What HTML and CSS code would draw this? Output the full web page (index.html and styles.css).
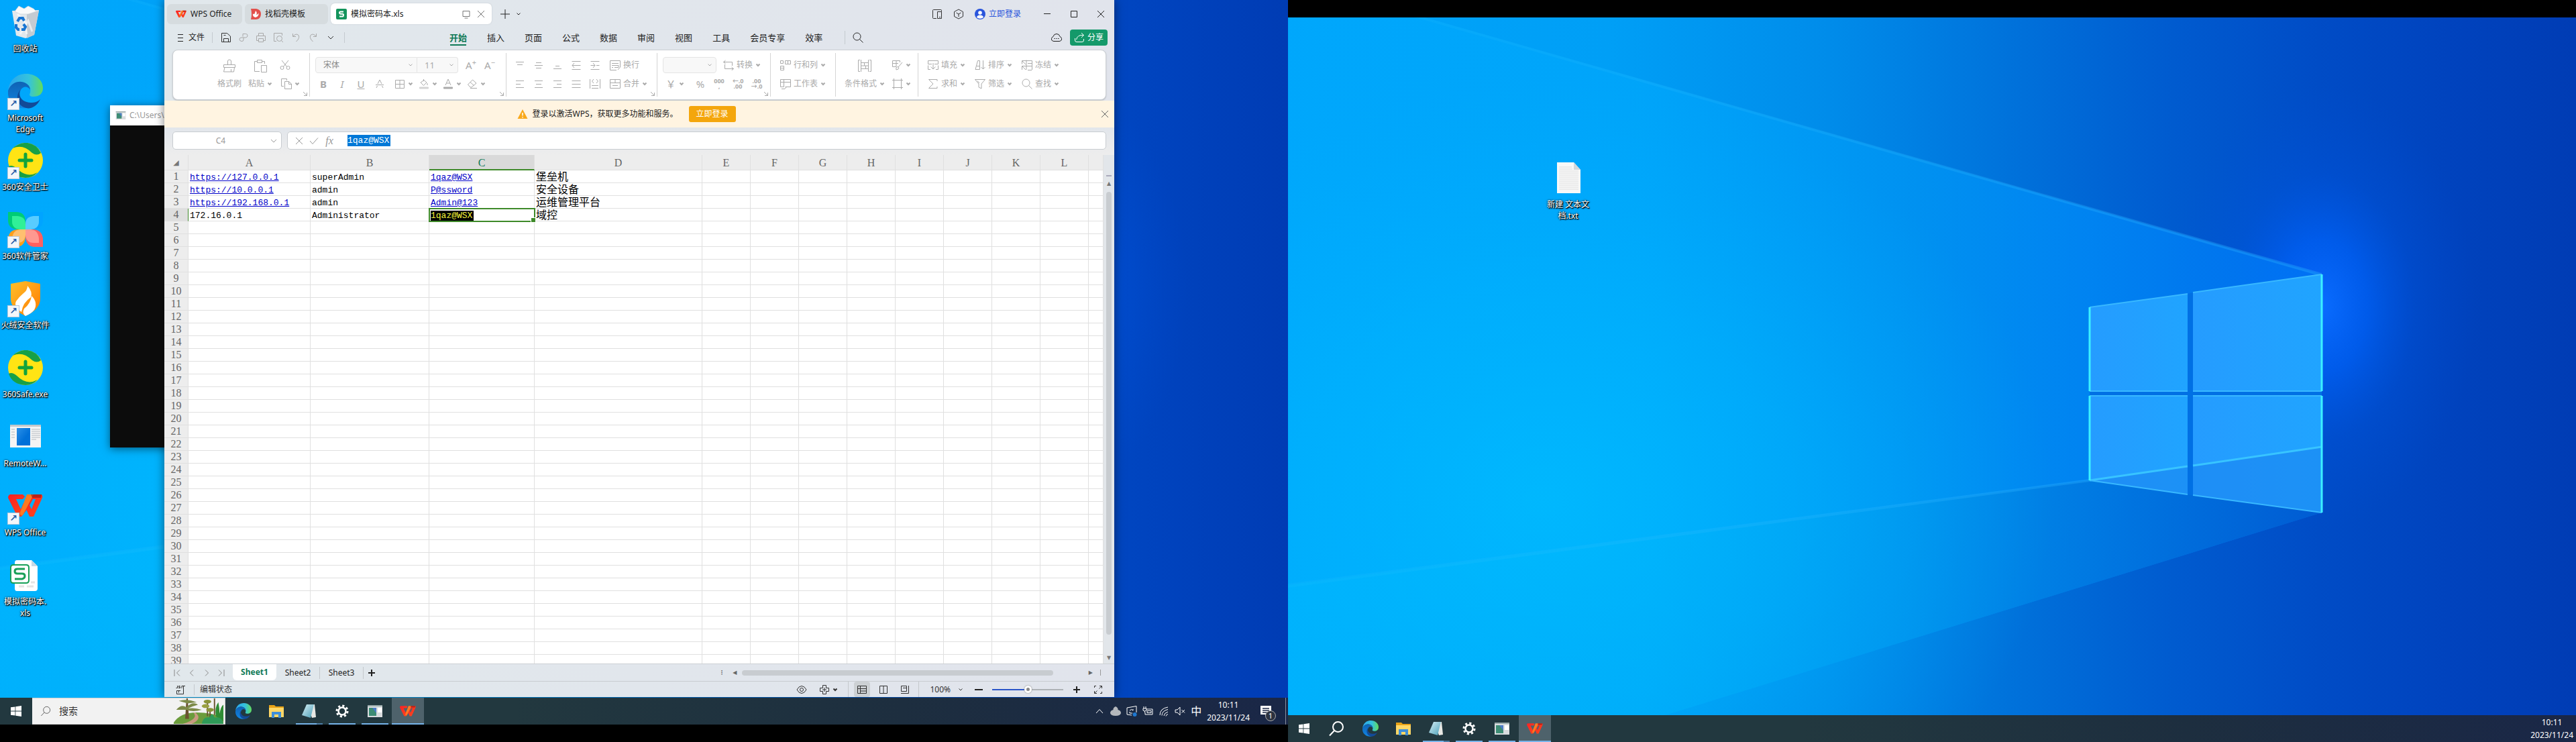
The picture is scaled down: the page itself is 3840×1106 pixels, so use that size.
FILE: index.html
```html
<!DOCTYPE html>
<html lang="zh-CN">
<head>
<meta charset="utf-8">
<title>模拟密码本.xls - WPS Office</title>
<link rel="stylesheet" href="styles.css">
</head>
<body>
<svg class="sprite" aria-hidden="true">
  <defs>
    <linearGradient id="base" x1="0" x2="1" y1="0" y2="0"><stop offset="0" stop-color="#00a4fa"/><stop offset=".25" stop-color="#009ff6"/><stop offset=".42" stop-color="#008cea"/><stop offset=".55" stop-color="#0074dc"/><stop offset=".68" stop-color="#005cd0"/><stop offset=".8" stop-color="#004cc6"/><stop offset=".9" stop-color="#0043be"/><stop offset="1" stop-color="#003cb4"/></linearGradient>
    <linearGradient id="cone" gradientUnits="userSpaceOnUse" x1="0" x2="1541" y1="0" y2="0"><stop offset="0" stop-color="#00a8fc"/><stop offset=".35" stop-color="#00a6fb"/><stop offset=".6" stop-color="#0096f4"/><stop offset=".78" stop-color="#008af8"/><stop offset="1" stop-color="#0074f4"/></linearGradient>
    <linearGradient id="floor" gradientUnits="userSpaceOnUse" x1="0" x2="1541" y1="800" y2="940"><stop offset="0" stop-color="#00b2fc"/><stop offset=".35" stop-color="#00a8f6"/><stop offset=".6" stop-color="#0090ea"/><stop offset=".8" stop-color="#0072dc"/><stop offset="1" stop-color="#0056cc"/></linearGradient>
    <linearGradient id="beam" x1="0" x2="1" y1="0" y2="0"><stop offset="0" stop-color="#3cc8ff" stop-opacity=".08"/><stop offset="1" stop-color="#2ab0ff" stop-opacity=".35"/></linearGradient>
    <radialGradient id="glow"><stop offset="0" stop-color="#0a6cff"/><stop offset=".3" stop-color="#0062fa" stop-opacity=".7"/><stop offset=".6" stop-color="#0058e8" stop-opacity=".25"/><stop offset="1" stop-color="#0050d8" stop-opacity="0"/></radialGradient>
    <radialGradient id="haze"><stop offset="0" stop-color="#00beff" stop-opacity=".75"/><stop offset=".5" stop-color="#00b8ff" stop-opacity=".45"/><stop offset="1" stop-color="#00b0ff" stop-opacity="0"/></radialGradient>
    <linearGradient id="pane" x1="0" x2="1" y1="0" y2="0"><stop offset="0" stop-color="#259cff"/><stop offset="1" stop-color="#20a4ff"/></linearGradient>
    <linearGradient id="edgeA" x1="0" x2="1" y1="0" y2="0"><stop offset="0" stop-color="#2aa5ee"/><stop offset=".6" stop-color="#35c3dc"/><stop offset="1" stop-color="#62dc5c"/></linearGradient>
    <linearGradient id="edgeB" x1="0" x2="0" y1="0" y2="1"><stop offset="0" stop-color="#0f62b4"/><stop offset="1" stop-color="#1186e4"/></linearGradient>
    <linearGradient id="wpsRed" x1="0" x2="1" y1="0" y2="1"><stop offset="0" stop-color="#fb1f24"/><stop offset="1" stop-color="#ff4a1c"/></linearGradient>
    <linearGradient id="shield" x1="0" x2="1" y1="0" y2="1"><stop offset="0" stop-color="#ffc02a"/><stop offset="1" stop-color="#ff7a00"/></linearGradient>
    <linearGradient id="note" x1="0" x2="1" y1="0" y2="1"><stop offset="0" stop-color="#d8f0f6"/><stop offset="1" stop-color="#4a9fb8"/></linearGradient>
    <linearGradient id="blueBox" x1="0" x2="1" y1="0" y2="1"><stop offset="0" stop-color="#2a90e8"/><stop offset=".6" stop-color="#0070d8"/></linearGradient>
  </defs>

  <symbol id="wallpaper" viewBox="0 0 1920 1040" preserveAspectRatio="none">
    <rect width="1920" height="1040" fill="url(#base)"/>
    <ellipse cx="1541" cy="430" rx="230" ry="330" fill="url(#glow)"/>
    <path d="M0 0H204L1541 383V738L562 1040H0Z" fill="url(#cone)" opacity=".8"/>
    <path d="M0 846L1195 690 1541 738 562 1040H0Z" fill="url(#floor)" opacity=".8"/>
    <ellipse cx="380" cy="720" rx="760" ry="620" fill="url(#haze)"/>
    <path d="M204 0L1541 381V386L190 0Z" fill="url(#beam)"/>
    <path d="M0 844L1195 688V692L0 850Z" fill="url(#beam)"/>
    <path d="M1195 432L1341 412V557H1195Z" fill="url(#pane)"/>
    <path d="M1349 410L1541 383V557H1349Z" fill="url(#pane)"/>
    <path d="M1195 564H1341V711L1195 690Z" fill="url(#pane)"/>
    <path d="M1349 564H1541V738L1349 712Z" fill="url(#pane)"/>
    <path d="M1195 690L1341 669V711ZM1349 668L1541 640V738L1349 712Z" fill="#1a86f0" opacity=".6"/>
    <path d="M1341 412V557H1349V410ZM1195 557V564H1541V557ZM1341 564V711L1349 712V564Z" fill="#0070e4"/>
    <path d="M1195 690L1341 669M1349 668L1541 640" stroke="#38c4ff" stroke-width="3" fill="none"/>
    <path d="M1349 410L1541 383M1195 432L1341 412M1195 557H1341M1349 557H1541M1195 564H1341M1349 564H1541M1195 690L1341 711M1349 712L1541 738" stroke="#38b8ff" stroke-width="2" fill="none"/>
    <path d="M1195 432V557M1195 564V690M1541 383V557M1541 564V738" stroke="#3cf0ff" stroke-width="3" fill="none"/>
  </symbol>

  <symbol id="edge" viewBox="0 0 52 52">
    <path d="M0 25C2 8 14 0 27 0 42 0 52 10 52 21 52 30 46 34 38 34 32 34 31 32 33 28 35 20 29 13 19 12 10 12 3 17 0 25Z" fill="url(#edgeA)"/>
    <path d="M0 25C4 15 12 11 20 12 28 13 33 18 33 24 30 18 22 18 19 24 14 34 20 46 32 50 14 56-2 42 0 25Z" fill="url(#edgeB)"/>
    <path d="M18 24C14 36 24 43 34 43 40 43 44 42 48 38 44 47 35 53 27 51 14 48 10 34 18 24Z" fill="#124a98"/>
  </symbol>
  <symbol id="wps" viewBox="0 0 52 34">
    <path d="M3 0H22L25 3 22 7H12L19 22 23 13 28 22 20 33H14L0 5Q0 1 3 0Z" fill="url(#wpsRed)"/>
    <path d="M34 0H50Q52 2 51 5L38 33H32L27 22 31 14 35 22 41 7H37L30 20 20 33 33 3Z" fill="url(#wpsRed)"/>
    <path d="M28 0H38L22 31Q17 32 18 27Z" fill="#ff7a20"/>
    <path d="M34 0H50L49 5H36Z" fill="#8e1a12" opacity=".6"/>
  </symbol>
  <symbol id="recycle" viewBox="0 0 52 52">
    <path d="M6 9L46 8 39 45 26 50 12 46Z" fill="#e3e8ec"/><path d="M28 14L46 9 39 45 28 50Z" fill="#c4cbd2"/>
    <path d="M10 10L16 2 24 6 30 2 38 6 42 10 30 14 18 14Z" fill="#fafafa" stroke="#ccd2d8" stroke-width=".7"/><path d="M14 14L20 20M24 20L28 44M18 44L30 24 36 40" stroke="#fff" stroke-width="3" opacity=".6"/>
    <path d="M14 25L17 20H22L24 24M12 29V34L15 37H17M20 37H24L26 33 23 29" fill="none" stroke="#1976d2" stroke-width="4"/>
  </symbol>
  <symbol id="safe" viewBox="0 0 52 52">
    <ellipse cx="26" cy="26" rx="26" ry="26" fill="#ffe414"/><path d="M7 8Q17-1 29 0 43 2 49 15 43 20 36 15 22 1 7 8Z" fill="#17a047"/><path d="M1 35Q6 32 13 38 28 53 44 44 36 52 26 52 6 51 1 35Z" fill="#17a047"/>
    <path d="M26 17V35M17 26H35" stroke="#12a43c" stroke-width="5" stroke-linecap="round"/>
  </symbol>
  <symbol id="manager" viewBox="0 0 52 52">
    <path d="M0 0H12Q26 0 26 15V26H14Q0 25 0 12Z" fill="#00cc76"/><path d="M6 6H14Q26 7 26 18V26H18Q6 25 6 14Z" fill="#30f098"/>
    <path d="M52 0H40Q26 0 26 15V26H38Q52 25 52 12Z" fill="#00a4ff"/><path d="M46 6H38Q26 7 26 18V26H34Q46 25 46 14Z" fill="#58ccff"/>
    <path d="M0 52V40Q1 27 14 26H26V37Q25 52 12 52Z" fill="#ff9f1c"/><path d="M6 46V40Q7 27 18 26H26V34Q25 46 14 46Z" fill="#ffc070"/>
    <path d="M52 52V40Q51 27 38 26H26V37Q27 52 40 52Z" fill="#ff6060"/><path d="M46 46V40Q45 27 34 26H26V34Q27 46 38 46Z" fill="#ff9890"/>
  </symbol>
  <symbol id="huorong" viewBox="0 0 52 52">
    <path d="M4 4L26 0 48 4V26Q48 42 26 52 4 42 4 26Z" fill="url(#shield)"/>
    <path d="M29 7Q37 16 34 24 22 32 20 46 8 38 12 30 16 24 22 19 29 14 29 7Z" fill="#fff"/><path d="M35 22Q45 32 39 43 34 49 26 52 20 48 24 41 34 33 35 22Z" fill="#fff"/>
  </symbol>
  <symbol id="remote" viewBox="0 0 52 52"><path d="M3 8H49V42H3Z" fill="#f4f4f4"/><path d="M3 8H49V11H3Z" fill="#c4c8cc"/><path d="M13 13H33V39H13Z" fill="url(#blueBox)"/><path d="M35 15H48M35 18H48M35 21H48M35 24H48M35 27H48M35 30H42M5 15H10M5 19H10M5 23H10M5 27H10" stroke="#b4bac0" stroke-width="1"/></symbol>
  <symbol id="xls" viewBox="0 0 52 52"><path d="M13 4H35L44 13V46Q44 50 40 50H13Q10 50 10 46V8Q10 4 13 4Z" fill="#fff"/><path d="M35 4V13H44Z" fill="#c8d8e4"/><path d="M16 43H24M28 43H38M34 37H40" stroke="#e4e4e4" stroke-width="3"/><rect x="4" y="11" width="27" height="27" rx="4" fill="#fff"/><path d="M8 11H27Q31 11 31 15V34Q31 38 27 38H8Q4 38 4 34V15Q4 11 8 11Z" fill="none" stroke="#19a058" stroke-width="2"/><path d="M25 17H14Q10 17 10 20.500T14 24H21Q25 24 25 27.500T21 32H10" fill="none" stroke="#19a058" stroke-width="3"/></symbol>
  <symbol id="txt" viewBox="0 0 52 52"><path d="M9 3H34L44 14V49H9Z" fill="#f8f8f8"/><path d="M34 3V14H44Z" fill="#d4d8dc"/><path d="M12 10H31M12 13H32M12 16H41M12 19H41M12 22H41M12 25H41M12 28H41M12 31H41M12 34H41M12 37H41M12 40H41M12 43H41" stroke="#dedede"/></symbol>

  <symbol id="start" viewBox="0 0 16 16"><path d="M0 2.300L6.500 1.400V7.600H0ZM7.300 1.300L16 0V7.600H7.300ZM0 8.400H6.500V14.600L0 13.700ZM7.300 8.400H16V16L7.300 14.700Z" fill="#fff"/></symbol>
  <symbol id="lens" viewBox="0 0 24 24"><circle cx="14.500" cy="9.500" r="7.500"/><path d="M9 15L2 22.500"/></symbol>
  <symbol id="folder" viewBox="0 0 24 24"><path d="M1 3H9L11 5H23V21H1Z" fill="#e8a317"/><path d="M1 7H23V21H1Z" fill="#ffd867"/><path d="M5 22V13H19V22H15V17H9V22Z" fill="#3f8fd8"/></symbol>
  <symbol id="notepad" viewBox="0 0 24 24"><path d="M9 2H20L22 21 16 22Z" fill="#e8e8e4"/><path d="M8 2H19L14 22 1 18Z" fill="url(#note)"/></symbol>
  <symbol id="gear" viewBox="0 0 24 24"><g fill="none" stroke="#fff"><circle cx="12" cy="12" r="5.500" stroke-width="2.500"/><circle cx="12" cy="12" r="8" stroke-width="3" stroke-dasharray="3.140 3.140"/></g></symbol>
  <symbol id="console" viewBox="0 0 24 24"><path d="M1 3H23V21H1Z" fill="#d8dcde"/><path d="M1 3H23V5H1Z" fill="#9aa"/><path d="M3 7H14V19H3Z" fill="#3d8c74"/><path d="M8 7H14V15Z" fill="#4c7cc8"/><path d="M16 7H22V14H16Z" fill="#fff"/></symbol>
  <symbol id="forest" viewBox="0 0 78 40"><path d="M0 38Q10 22 36 22 60 22 78 30V40H0Z" fill="#6b9c3c"/><path d="M14 40Q40 32 31 22L34 22Q46 32 28 40Z" fill="#c89a80"/><path d="M20 0L18 32H24L22 0Z" fill="#6a5230"/><path d="M4 18Q12 8 20 14 30 4 38 10 30 12 22 16 32 14 44 18 30 22 20 18 10 18 4 18ZM8 4Q20 0 36 6L22 8Z" fill="#7c8a48"/><path d="M53 6V28M64 0V26M57 18V30" stroke="#6a5230" stroke-width="2"/><ellipse cx="53" cy="5" rx="6" ry="3" fill="#8a9438"/><ellipse cx="50" cy="12" rx="6" ry="3" fill="#9aa040"/><ellipse cx="57" cy="18" rx="6" ry="3" fill="#8a9438"/><path d="M66 28Q64 14 70 6 72 16 72 24 74 12 78 10V36Z" fill="#2f8c34"/><path d="M44 40Q46 28 56 30 60 20 64 30 76 28 78 40Z" fill="#2f9a58"/></symbol>

  <g fill="none" stroke="currentColor">
    <symbol id="chev" viewBox="0 0 8 8"><path d="M1.500 2.500L4 5 6.500 2.500"/></symbol>
    <symbol id="x" viewBox="0 0 16 16"><path d="M3 3L13 13M13 3L3 13"/></symbol>
    <symbol id="plus" viewBox="0 0 16 16"><path d="M8 1V15M1 8H15"/></symbol>
    <symbol id="min" viewBox="0 0 16 16"><path d="M3 7.500H13"/></symbol>
    <symbol id="max" viewBox="0 0 16 16"><path d="M3.500 3.500H12.500V12.500H3.500Z"/></symbol>
    <symbol id="monitor" viewBox="0 0 16 16"><path d="M3 3.500H13V11.500H3ZM5.500 14H10.500"/></symbol>
    <symbol id="split" viewBox="0 0 16 16"><path d="M7 14.500H2.500Q1.500 14.500 1.500 13.500V2.500Q1.500 1.500 2.500 1.500H13.500Q14.500 1.500 14.500 2.500V4M8.500 4.500H14.500V14.500H8.500ZM11 12.500H13"/></symbol>
    <symbol id="cube" viewBox="0 0 16 16"><path d="M8 1L14.500 4.500V11.500L8 15 1.500 11.500V4.500ZM4.500 6L8 8 11.500 6M8 8V12"/></symbol>
    <symbol id="menu" viewBox="0 0 16 16"><path d="M4 3.500H12M4 8.500H12M4 13.500H12"/></symbol>
    <symbol id="save" viewBox="0 0 16 16"><path d="M1.500 1.500H9.500L14.500 6V14.500H1.500ZM4.500 14V9.500H11.500V14M4.500 4.500H7.500"/></symbol>
    <symbol id="output" viewBox="0 0 16 16"><path d="M7 6.500V2.500H11.500Q14 2.500 14 5T11.500 8H5Q2 8 2 10.500T5 13.500 8 11V8"/></symbol>
    <symbol id="print" viewBox="0 0 16 16"><path d="M4.500 5V1.500H11.500V5M4 12.500H1.500V5.500H14.500V12.500H12M4.500 9.500H11.500V14.500H4.500Z"/></symbol>
    <symbol id="preview" viewBox="0 0 16 16"><path d="M5 13.500H1.500V1.500H13.500V5M12.500 12.500L15 15"/><circle cx="9.500" cy="9.500" r="4"/></symbol>
    <symbol id="undo" viewBox="0 0 16 16"><path d="M3.500 2V6.500H8M4 6Q8 1.500 11.500 4 15 8 8.500 14"/></symbol>
    <symbol id="redo" viewBox="0 0 16 16"><path d="M12.500 2V6.500H8M12 6Q8 1.500 4.500 4 1 8 7.500 14"/></symbol>
    <symbol id="search" viewBox="0 0 16 16"><circle cx="6.500" cy="6.500" r="5.500"/><path d="M10.500 10.500L15.500 15.500"/></symbol>
    <symbol id="cloud" viewBox="0 0 16 16"><path d="M4 13.500Q0 13 .5 9.500 1 7 3 6.500 4 2.500 8 2.500T13 6.500Q15 7 15.500 9.500 16 13 12 13.500ZM4.500 9.500H6M7.300 9.500H8.700M10 9.500H11.500"/></symbol>
    <symbol id="share" viewBox="0 0 16 16"><path d="M11 1L14.500 4.500 11 8M14 4.500Q5 3.500 3.500 11M1.500 9V12Q1.500 14.500 4 14.500H12Q14.500 14.500 14.500 12V10"/></symbol>
    <symbol id="brush" viewBox="0 0 20 20"><path d="M7.500 8V3Q7.500 1 10 1T12.500 3V8M1.500 8.500H18.500V12.500H1.500ZM3 12.500L1.500 19H16.500L17.500 12.500M12.500 19V15"/></symbol>
    <symbol id="paste" viewBox="0 0 20 20"><path d="M9 18.500H1.500V3.500H5M13 3.500H16.500V7M5.500 1.500H12.500V5.500H5.500ZM11.500 9.500H19.500V19.500H11.500Z"/></symbol>
    <symbol id="cut" viewBox="0 0 16 16"><path d="M3 1L11 11M13 1L5 11"/><circle cx="3.500" cy="12" r="2.500"/><circle cx="12.500" cy="12" r="2.500"/></symbol>
    <symbol id="copy" viewBox="0 0 16 16"><path d="M4 11.500H.5V.5H8.500V3M5.500 4.500H11.500L15.500 8V15.500H5.500ZM11.500 4.500V8.500H15"/></symbol>
    <symbol id="border" viewBox="0 0 16 16"><path d="M1.500 2.500H14.500V14.500H1.500ZM8 2.500V14.500M1.500 8.500H14.500"/></symbol>
    <symbol id="fill" viewBox="0 0 16 16"><path d="M7.500 1V4M3 6L8 2.500 12 6 7.500 10.500ZM13 7V10"/><rect x="1" y="12.500" width="14" height="3" rx="1" fill="#d4d4d4"/></symbol>
    <symbol id="color" viewBox="0 0 16 16"><path d="M4 10L8 1 12 10M5.500 7H10.500"/><rect x="1" y="12.500" width="14" height="3" rx="1" fill="#aaa"/></symbol>
    <symbol id="erase" viewBox="0 0 16 16"><path d="M1.500 9L8.500 2 14 7 7 13H5ZM5 5.500L10.500 10.500M5 14.500H15"/></symbol>
    <symbol id="strike" viewBox="0 0 16 16"><path d="M2 9.500H14M5 8L8 2 11 8M4.500 11L3 14M11.500 11L13 14"/></symbol>
    <symbol id="at" viewBox="0 0 16 16"><path d="M2 3.500H14M4 7.500H12"/></symbol>
    <symbol id="am" viewBox="0 0 16 16"><path d="M4 4.500H12M2 8.500H14M4 12.500H12"/></symbol>
    <symbol id="ab" viewBox="0 0 16 16"><path d="M5 9.500H11M2 13.500H14"/></symbol>
    <symbol id="outdent" viewBox="0 0 16 16"><path d="M1.500 2.500H14.500M1.500 14.500H14.500M2 8.500H14.500M5 5L2 8.500 5 12"/></symbol>
    <symbol id="indent" viewBox="0 0 16 16"><path d="M1.500 2.500H14.500M1.500 14.500H14.500M1.500 8.500H8M10 8.500H14.500M5 5L8 8.500 5 12"/></symbol>
    <symbol id="al" viewBox="0 0 16 16"><path d="M2 3.500H14M2 8.500H9M2 13.500H14"/></symbol>
    <symbol id="ac" viewBox="0 0 16 16"><path d="M2 3.500H14M4 8.500H12M2 13.500H14"/></symbol>
    <symbol id="ar" viewBox="0 0 16 16"><path d="M2 3.500H14M7 8.500H14M2 13.500H14"/></symbol>
    <symbol id="aj" viewBox="0 0 16 16"><path d="M1.500 3.500H14.500M1.500 8.500H14.500M1.500 13.500H14.500"/></symbol>
    <symbol id="dist" viewBox="0 0 16 16"><path d="M.5 1V15M15.500 1V15M3 10.500H13M3 14.500H13M6 1L3.500 4 6 7M10 1L12.500 4 10 7"/></symbol>
    <symbol id="wrap" viewBox="0 0 16 16"><path d="M10 15.500H.5V1.500H15.500V11L12 15M3 5.500H13M3 8.500H13V11.500H7M3 11.500H5"/></symbol>
    <symbol id="merge" viewBox="0 0 16 16"><path d="M.5 1.500H15.500V14.500H.5ZM.5 6.500H15.500M8 1.500V6.500M4 10.500H12"/></symbol>
    <symbol id="convert" viewBox="0 0 16 16"><path d="M3.500 1L.5 3.500 3.500 6M.5 3.500H13.500V9M2.500 7V13.500H15.500M12.500 11L15.500 13.500 12.500 16"/></symbol>
    <symbol id="rowcol" viewBox="0 0 16 16"><path d="M.5 1.500H4.500V5.500H.5ZM.5 9.500H5.500V15.500H.5ZM.5 12.500H5.500M7.500 1.500H15.500V6.500H7.500ZM11.500 1.500V6.500"/></symbol>
    <symbol id="sheet" viewBox="0 0 16 16"><path d="M15.500 12.500H7.500M5.500 12.500H.5V1.500H15.500V12.500M.5 5.500H15.500M5.500 1.500V12.500M2 15.500H7L9 13"/></symbol>
    <symbol id="cond" viewBox="0 0 20 20"><path d="M3 1.500H.5V18.500H3M17 1.500H19.500V18.500H17M4.500 1V19M15.500 1V19M4.500 5.500H15.500M4.500 10H15.500M4.500 14.500H15.500M9.500 5.500V10M11.500 10V14.500"/></symbol>
    <symbol id="tstyle" viewBox="0 0 16 16"><path d="M6 10.500H.5V1.500H11.500V4M.5 5.500H9M6 1.500V10.500M15 4L9 11M6 15Q5 11 8.500 10.500 11 12 9 14Z"/></symbol>
    <symbol id="cellbox" viewBox="0 0 16 16"><path d="M2.500 0V16M13.500 0V16M0 2.500H16M0 13.500H16"/></symbol>
    <symbol id="filldown" viewBox="0 0 16 16"><path d="M6 6.500H.5V1.500H15.500V6.500H10M4 14.500H.5V8.500M12 14.500H15.500V8.500M8 5V14M4.500 10.500L8 14 11.500 10.500"/></symbol>
    <symbol id="sum" viewBox="0 0 16 16"><path d="M14 4V1.500H1.500L8 8 1.500 14.500H14V12"/></symbol>
    <symbol id="sort" viewBox="0 0 16 16"><path d="M1 14.500L4.500 1.500H7.500V14.500ZM3 9.500H7.500M12.500 1V14M9.500 11L12.500 14 15.500 11"/></symbol>
    <symbol id="filter" viewBox="0 0 16 16"><path d="M.5 1.500H15.500L10 8V15L6 13V8ZM4 3.500L7 7"/></symbol>
    <symbol id="freeze" viewBox="0 0 16 16"><path d="M7 .5V15M.5 6.500V1.500H15.500V15M.5 15V9.500H15.500M9 5.500H15.500M1 2L6 7M15 15.500H9M1 10L6 15"/></symbol>
    <symbol id="launch" viewBox="0 0 8 8"><path d="M1 1L6 6M6.500 2V6.500H2"/></symbol>
    <symbol id="check" viewBox="0 0 16 16"><path d="M2 8L6 12.500 14 3.500"/></symbol>
    <symbol id="first" viewBox="0 0 16 16"><path d="M4 3V13M12 3.500L7.500 8 12 12.500"/></symbol>
    <symbol id="prev" viewBox="0 0 16 16"><path d="M10 3.500L5.500 8 10 12.500"/></symbol>
    <symbol id="next" viewBox="0 0 16 16"><path d="M6 3.500L10.500 8 6 12.500"/></symbol>
    <symbol id="last" viewBox="0 0 16 16"><path d="M12 3V13M4 3.500L8.500 8 4 12.500"/></symbol>
    <symbol id="macro" viewBox="0 0 16 16"><path d="M3.500 2V5.500H1.500M7.500 2.500H5.500V4H7.500V5.500H5M10 6V2.500H15M12.500 2.500V14.500H2.500V9.500H8M5.500 12.500V9.500"/></symbol>
    <symbol id="eye" viewBox="0 0 16 16"><path d="M1 8Q4 2.500 8 2.500T15 8Q12 13.500 8 13.500T1 8Z"/><circle cx="8" cy="8" r="2.500"/></symbol>
    <symbol id="target" viewBox="0 0 16 16"><path d="M5.500 5.500V1.500H10.500V5.500H14.500V10.500H10.500V14.500H5.500V10.500H1.500V5.500ZM8 5V11M5 8H11"/></symbol>
    <symbol id="vgrid" viewBox="0 0 16 16"><path d="M1.500 2.500H14.500V13.500H1.500ZM1.500 6.500H14.500M5.500 2.500V13.500M5.500 10H14.500"/></symbol>
    <symbol id="vbook" viewBox="0 0 16 16"><path d="M2.500 2.500H13.500V13.500H2.500ZM8 2.500V13.500"/></symbol>
    <symbol id="vpage" viewBox="0 0 16 16"><path d="M2.500 2.500H10.500V10.500H2.500ZM13.500 2V13.500H2M5 5.500H10.500"/></symbol>
    <symbol id="full" viewBox="0 0 16 16"><path d="M2.500 5V2.500H5M10 2.500H13.500V6M9.500 6.500L13 3M2.500 10V13.500H6M3 13L6.500 9.500M11 13.500H13.500V11"/></symbol>
    <symbol id="up" viewBox="0 0 16 16"><path d="M3 11L8 5.500 13 11"/></symbol>
    <symbol id="sync" viewBox="0 0 16 16"><path d="M1 3L15 .5V10M8 14L1 13V3M5 7Q8 4 10 7V5M5 9V11H9"/><circle cx="12.500" cy="13" r="3" fill="#1f78d0" stroke="none"/></symbol>
    <symbol id="battery" viewBox="0 0 16 16"><path d="M6 5H15V13H4V10M2 1V4M5 1V4M1 4H6V7Q3.500 9 1 7ZM3.500 8V10M7 7.500H13V10.500H7Z"/></symbol>
    <symbol id="wifi" viewBox="0 0 16 16"><path d="M2 14Q2 4 14 2M5 14.500Q5 7.500 14 5.500M8 15Q8 11 14 9M11 15.500Q11 13.500 14 12.500"/></symbol>
    <symbol id="mute" viewBox="0 0 16 16"><path d="M1 6H4L8 2V14L4 10H1ZM10.500 6L15 10.500M15 6L10.500 10.500"/></symbol>
  </g>
</svg>

<main class="screens">
  <section class="screen screen-main" aria-label="主桌面">
    <div class="desktop">
      <svg class="wall"><use href="#wallpaper"/></svg>
      <div class="icons">
        <a class="shortcut" href="#"><svg class="art"><use href="#recycle"/></svg>回收站</a>
        <a class="shortcut linked" href="#"><svg class="art"><use href="#edge"/></svg>Microsoft Edge</a>
        <a class="shortcut linked" href="#"><svg class="art"><use href="#safe"/></svg>360安全卫士</a>
        <a class="shortcut linked" href="#"><svg class="art"><use href="#manager"/></svg>360软件管家</a>
        <a class="shortcut linked" href="#"><svg class="art"><use href="#huorong"/></svg>火绒安全软件</a>
        <a class="shortcut" href="#"><svg class="art"><use href="#safe"/></svg>360Safe.exe</a>
        <a class="shortcut" href="#"><svg class="art"><use href="#remote"/></svg>RemoteW...</a>
        <a class="shortcut linked" href="#"><svg class="art"><use href="#wps"/></svg>WPS Office</a>
        <a class="shortcut" href="#"><svg class="art"><use href="#xls"/></svg>模拟密码本.<br>xls</a>
      </div>
      <section class="console" aria-label="控制台"><header><svg class="i"><use href="#console"/></svg>C:\Users\Administrator</header></section>

      <article class="wps">
        <header class="titlebar">
          <div class="tab"><svg class="i"><use href="#wps"/></svg>WPS Office</div>
          <div class="tab tab-docer"><svg class="i" viewBox="0 0 16 16"><path d="M1 0H9Q16 1 16 8T9 16H1Q3 8 1 0Z" fill="#e2504c"/><path d="M8 3Q11 6 9 9 13 8 12 5 14 11 8 13 3 12 4 7 6 11 8 3Z" fill="#fff"/></svg>找稻壳模板</div>
          <div class="tab tab-file"><svg class="i" viewBox="0 0 16 16"><rect width="16" height="16" rx="2" fill="#14945c"/><path d="M11 4.500H6.500Q5 4.500 5 6T6.500 7.800H9.500Q11 7.800 11 9.500T9.500 11.500H5" fill="none" stroke="#fff" stroke-width="2"/></svg><span class="grow">模拟密码本.xls</span><svg class="i dim"><use href="#monitor"/></svg><button class="bare dim" aria-label="关闭标签"><svg class="i"><use href="#x"/></svg></button></div>
          <button class="bare newtab" aria-label="新建"><svg class="i"><use href="#plus"/></svg></button>
          <button class="bare" aria-label="标签列表"><svg class="c"><use href="#chev"/></svg></button>
          <div class="account">
            <button class="bare" aria-label="窗口"><svg class="i"><use href="#split"/></svg></button>
            <button class="bare" aria-label="应用"><svg class="i"><use href="#cube"/></svg></button>
            <a class="login" href="#"><svg class="i" viewBox="0 0 16 16"><circle cx="8" cy="8" r="8" fill="#2a55dc"/><circle cx="8" cy="6" r="2.800" fill="#fff"/><path d="M3 13Q3.500 9.500 8 9.500T13 13Q8 16.500 3 13Z" fill="#fff"/></svg>立即登录</a>
          </div>
          <div class="winctl">
            <button class="bare" aria-label="最小化"><svg class="i"><use href="#min"/></svg></button>
            <button class="bare" aria-label="最大化"><svg class="i"><use href="#max"/></svg></button>
            <button class="bare" aria-label="关闭"><svg class="i"><use href="#x"/></svg></button>
          </div>
        </header>

        <nav class="menubar">
          <button class="bare file"><svg class="i"><use href="#menu"/></svg>文件</button>
          <div class="quick">
            <button class="bare on" aria-label="保存"><svg class="i"><use href="#save"/></svg></button>
            <button class="bare" aria-label="输出"><svg class="i"><use href="#output"/></svg></button>
            <button class="bare" aria-label="打印"><svg class="i"><use href="#print"/></svg></button>
            <button class="bare" aria-label="预览"><svg class="i"><use href="#preview"/></svg></button>
            <button class="bare" aria-label="撤销"><svg class="i"><use href="#undo"/></svg></button>
            <button class="bare" aria-label="恢复"><svg class="i"><use href="#redo"/></svg></button>
            <button class="bare on" aria-label="更多"><svg class="i" viewBox="0 0 16 16"><path d="M4 6L8 10 12 6" fill="none" stroke="currentColor"/></svg></button>
          </div>
          <div class="sections">
            <a class="current" href="#">开始</a><a href="#">插入</a><a href="#">页面</a><a href="#">公式</a><a href="#">数据</a><a href="#">审阅</a><a href="#">视图</a><a href="#">工具</a><a href="#">会员专享</a><a href="#">效率</a>
          </div>
          <button class="bare find" aria-label="搜索"><svg class="i"><use href="#search"/></svg></button>
          <button class="bare push" aria-label="云同步"><svg class="i"><use href="#cloud"/></svg></button>
          <button class="share"><svg class="i"><use href="#share"/></svg>分享</button>
        </nav>

        <div class="ribbon">
          <div class="group group-clip">
            <button class="big" disabled><svg class="i20"><use href="#brush"/></svg><span>格式刷</span></button>
            <button class="big" disabled><svg class="i20"><use href="#paste"/></svg><span>粘贴<svg class="c"><use href="#chev"/></svg></span></button>
            <div class="stack">
              <div class="line"><button class="tool" disabled aria-label="剪切"><svg class="i"><use href="#cut"/></svg></button></div>
              <div class="line"><button class="drop" disabled aria-label="复制"><svg class="i"><use href="#copy"/></svg><svg class="c"><use href="#chev"/></svg></button></div>
            </div>
            <svg class="launch c"><use href="#launch"/></svg>
          </div>
          <div class="group group-font">
            <div class="stack">
              <div class="line">
                <div class="combo"><select class="face" disabled aria-label="字体"><option>宋体</option></select><svg class="c"><use href="#chev"/></svg></div>
                <div class="combo combo-size"><select class="size" disabled aria-label="字号"><option>11</option></select><svg class="c"><use href="#chev"/></svg></div>
                <button class="tool glyph" disabled>A<sup>+</sup></button><button class="tool glyph" disabled>A<sup>−</sup></button>
              </div>
              <div class="line">
                <button class="tool glyph b" disabled>B</button><button class="tool glyph it" disabled>I</button><button class="tool glyph u" disabled>U</button><button class="tool" disabled aria-label="删除线"><svg class="i"><use href="#strike"/></svg></button>
                <button class="drop" disabled aria-label="边框"><svg class="i"><use href="#border"/></svg><svg class="c"><use href="#chev"/></svg></button>
                <button class="drop" disabled aria-label="填充色"><svg class="i"><use href="#fill"/></svg><svg class="c"><use href="#chev"/></svg></button>
                <button class="drop" disabled aria-label="字体色"><svg class="i"><use href="#color"/></svg><svg class="c"><use href="#chev"/></svg></button>
                <button class="drop" disabled aria-label="清除"><svg class="i"><use href="#erase"/></svg><svg class="c"><use href="#chev"/></svg></button>
              </div>
            </div>
            <svg class="launch c"><use href="#launch"/></svg>
          </div>
          <div class="group group-align">
            <div class="stack">
              <div class="line">
                <button class="tool" disabled aria-label="顶端对齐"><svg class="i"><use href="#at"/></svg></button><button class="tool" disabled aria-label="垂直居中"><svg class="i"><use href="#am"/></svg></button><button class="tool" disabled aria-label="底端对齐"><svg class="i"><use href="#ab"/></svg></button><button class="tool" disabled aria-label="减少缩进"><svg class="i"><use href="#outdent"/></svg></button><button class="tool" disabled aria-label="增加缩进"><svg class="i"><use href="#indent"/></svg></button>
                <button class="drop" disabled><svg class="i"><use href="#wrap"/></svg>换行</button>
              </div>
              <div class="line">
                <button class="tool" disabled aria-label="左对齐"><svg class="i"><use href="#al"/></svg></button><button class="tool" disabled aria-label="居中"><svg class="i"><use href="#ac"/></svg></button><button class="tool" disabled aria-label="右对齐"><svg class="i"><use href="#ar"/></svg></button><button class="tool" disabled aria-label="两端对齐"><svg class="i"><use href="#aj"/></svg></button><button class="tool" disabled aria-label="分散对齐"><svg class="i"><use href="#dist"/></svg></button>
                <button class="drop" disabled><svg class="i"><use href="#merge"/></svg>合并<svg class="c"><use href="#chev"/></svg></button>
              </div>
            </div>
            <svg class="launch c"><use href="#launch"/></svg>
          </div>
          <div class="group">
            <div class="stack">
              <div class="line">
                <div class="combo combo-num"><select class="number" disabled aria-label="数字格式"><option></option></select><svg class="c"><use href="#chev"/></svg></div>
                <button class="drop" disabled><svg class="i"><use href="#convert"/></svg>转换<svg class="c"><use href="#chev"/></svg></button>
              </div>
              <div class="line">
                <button class="drop yen" disabled><span class="glyph">￥</span><svg class="c"><use href="#chev"/></svg></button>
                <button class="tool glyph" disabled>%</button><button class="tool tiny" disabled>000<br>,</button><button class="tool tiny" disabled>←.0<br>.00</button><button class="tool tiny" disabled>.00<br>→.0</button>
              </div>
            </div>
            <svg class="launch c"><use href="#launch"/></svg>
          </div>
          <div class="group group-cells">
            <div class="stack">
              <div class="line"><button class="drop" disabled><svg class="i"><use href="#rowcol"/></svg>行和列<svg class="c"><use href="#chev"/></svg></button></div>
              <div class="line"><button class="drop" disabled><svg class="i"><use href="#sheet"/></svg>工作表<svg class="c"><use href="#chev"/></svg></button></div>
            </div>
          </div>
          <div class="group group-style">
            <button class="big cond" disabled><svg class="i20"><use href="#cond"/></svg><span>条件格式<svg class="c"><use href="#chev"/></svg></span></button>
            <div class="stack">
              <div class="line"><button class="drop" disabled aria-label="表格样式"><svg class="i"><use href="#tstyle"/></svg><svg class="c"><use href="#chev"/></svg></button></div>
              <div class="line"><button class="drop" disabled aria-label="单元格样式"><svg class="i"><use href="#cellbox"/></svg><svg class="c"><use href="#chev"/></svg></button></div>
            </div>
          </div>
          <div class="group group-edit">
            <div class="stack">
              <div class="line"><button class="drop" disabled><svg class="i"><use href="#filldown"/></svg>填充<svg class="c"><use href="#chev"/></svg></button><button class="drop" disabled><svg class="i"><use href="#sort"/></svg>排序<svg class="c"><use href="#chev"/></svg></button><button class="drop" disabled><svg class="i"><use href="#freeze"/></svg>冻结<svg class="c"><use href="#chev"/></svg></button></div>
              <div class="line"><button class="drop" disabled><svg class="i"><use href="#sum"/></svg>求和<svg class="c"><use href="#chev"/></svg></button><button class="drop" disabled><svg class="i"><use href="#filter"/></svg>筛选<svg class="c"><use href="#chev"/></svg></button><button class="drop" disabled><svg class="i"><use href="#search"/></svg>查找<svg class="c"><use href="#chev"/></svg></button></div>
            </div>
          </div>
        </div>

        <div class="notice">
          <p><svg class="i" viewBox="0 0 16 16"><path d="M8 1L15.500 15H.5Z" fill="#f9a81a"/><path d="M8 6V10.500M8 12V13.500" stroke="#fff" stroke-width="1.500"/></svg>登录以激活WPS，获取更多功能和服务。</p>
          <button class="activate">立即登录</button>
          <button class="bare close" aria-label="关闭提示"><svg class="i"><use href="#x"/></svg></button>
        </div>

        <div class="formula">
          <div class="field namebox"><input value="C4" aria-label="名称框"><svg class="i" viewBox="0 0 16 16"><path d="M4 6L8 10 12 6" fill="none" stroke="currentColor"/></svg></div>
          <div class="field expr"><button class="bare" aria-label="取消"><svg class="i"><use href="#x"/></svg></button><button class="bare" aria-label="确认"><svg class="i"><use href="#check"/></svg></button><button class="bare fx">fx</button><input class="selected" value="1qaz@WSX" aria-label="编辑栏"></div>
        </div>

        <div class="sheet">
          <div class="grid">
            <table>
              <colgroup><col class="w-num"><col class="w-a"><col class="w-b"><col class="w-c"><col class="w-d"><col class="w-e" span="8"><col></colgroup>
              <thead><tr><th class="corner">◢</th><th>A</th><th>B</th><th class="here">C</th><th>D</th><th>E</th><th>F</th><th>G</th><th>H</th><th>I</th><th>J</th><th>K</th><th>L</th><th></th></tr></thead>
              <tbody id="rows">
                <tr><th>1</th><td><a href="#">https://127.0.0.1</a></td><td>superAdmin</td><td><a href="#">1qaz@WSX</a></td><td class="zh">堡垒机</td></tr>
                <tr><th>2</th><td><a href="#">https://10.0.0.1</a></td><td>admin</td><td><a href="#">P@ssword</a></td><td class="zh">安全设备</td></tr>
                <tr><th>3</th><td><a href="#">https://192.168.0.1</a></td><td>admin</td><td><a href="#">Admin@123</a></td><td class="zh">运维管理平台</td></tr>
                <tr><th class="here">4</th><td>172.16.0.1</td><td>Administrator</td><td class="active"><input value="1qaz@WSX" aria-label="C4"></td><td class="zh">域控</td></tr>
              </tbody>
            </table>
          </div>
          <div class="vbar"><i class="dash"></i><span>▲</span><i class="thumb"></i><span>▼</span></div>
        </div>

        <div class="sheets">
          <div class="nav"><button class="bare" aria-label="第一个"><svg class="i"><use href="#first"/></svg></button><button class="bare" aria-label="上一个"><svg class="i"><use href="#prev"/></svg></button><button class="bare" aria-label="下一个"><svg class="i"><use href="#next"/></svg></button><button class="bare" aria-label="最后一个"><svg class="i"><use href="#last"/></svg></button></div>
          <button class="leaf open">Sheet1</button><button class="leaf">Sheet2</button><button class="leaf">Sheet3</button>
          <button class="bare add" aria-label="新建工作表"><svg class="i" viewBox="0 0 16 16"><path d="M8 3V13M3 8H13" stroke="#222" stroke-width="2"/></svg></button>
          <div class="hbar"><b>⋮</b><span>◀</span><i class="thumb"></i><span>▶</span><i class="dash"></i></div>
        </div>

        <footer class="status">
          <svg class="i"><use href="#macro"/></svg><span class="mode">编辑状态</span>
          <div class="views">
            <button class="bare" aria-label="护眼"><svg class="i"><use href="#eye"/></svg></button>
            <button class="drop" aria-label="阅读"><svg class="i"><use href="#target"/></svg><svg class="c"><use href="#chev"/></svg></button>
          </div>
          <div class="modes">
            <button class="bare lit" aria-label="普通视图"><svg class="i"><use href="#vgrid"/></svg></button>
            <button class="bare" aria-label="分页预览"><svg class="i"><use href="#vbook"/></svg></button>
            <button class="bare" aria-label="页面布局"><svg class="i"><use href="#vpage"/></svg></button>
          </div>
          <button class="bare zoom">100%<svg class="c"><use href="#chev"/></svg></button>
          <button class="bare" aria-label="缩小"><svg class="i" viewBox="0 0 16 16"><path d="M2 8H14" stroke="#222" stroke-width="2"/></svg></button>
          <input class="slider" type="range" value="50" aria-label="缩放">
          <button class="bare" aria-label="放大"><svg class="i" viewBox="0 0 16 16"><path d="M8 3V13M3 8H13" stroke="#222" stroke-width="2"/></svg></button>
          <button class="bare fullscreen" aria-label="全屏"><svg class="i"><use href="#full"/></svg></button>
        </footer>
      </article>
    </div>

    <footer class="taskbar">
      <button class="task" aria-label="开始"><svg class="i"><use href="#start"/></svg></button>
      <label class="searchbox"><svg class="i"><use href="#lens"/></svg><input placeholder="搜索"><svg class="scene"><use href="#forest"/></svg></label>
      <div class="apps">
        <button class="task" aria-label="Edge"><svg class="i24"><use href="#edge"/></svg></button>
        <button class="task" aria-label="资源管理器"><svg class="i24"><use href="#folder"/></svg></button>
        <button class="task run multi" aria-label="记事本"><svg class="i24"><use href="#notepad"/></svg></button>
        <button class="task run" aria-label="设置"><svg class="i24"><use href="#gear"/></svg></button>
        <button class="task run" aria-label="控制台"><svg class="i24"><use href="#console"/></svg></button>
        <button class="task front" aria-label="WPS"><svg class="i24"><use href="#wps"/></svg></button>
      </div>
      <div class="tray">
        <svg class="i"><use href="#up"/></svg>
        <svg class="i" viewBox="0 0 16 16"><path d="M8 1Q12 3 11.500 6 16 7 16 11 15 15 8 15T0 11Q0 7 4.500 6 4 3 8 1Z" fill="#b4b8bc"/></svg>
        <svg class="i"><use href="#sync"/></svg><svg class="i"><use href="#battery"/></svg><svg class="i"><use href="#wifi"/></svg><svg class="i"><use href="#mute"/></svg>
        <span class="ime">中</span>
        <time>10:11<br>2023/11/24</time>
        <div class="notify"><svg class="i" viewBox="0 0 16 16"><path d="M0 0H16V13H10L7 16V13H0Z" fill="#fff"/><path d="M3 4H13M3 7H13M3 10H10" stroke="#1b2745" stroke-width="1.500"/></svg><b>1</b></div>
      </div>
    </footer>
  </section>

  <section class="screen screen-side" aria-label="副桌面">
    <div class="desktop">
      <svg class="wall"><use href="#wallpaper"/></svg>
      <a class="shortcut loose" href="#"><svg class="art"><use href="#txt"/></svg>新建 文本文<br>档.txt</a>
    </div>
    <footer class="taskbar">
      <button class="task" aria-label="开始"><svg class="i"><use href="#start"/></svg></button>
      <button class="task bold" aria-label="搜索"><svg class="i24"><use href="#lens"/></svg></button>
      <div class="apps">
        <button class="task" aria-label="Edge"><svg class="i24"><use href="#edge"/></svg></button>
        <button class="task" aria-label="资源管理器"><svg class="i24"><use href="#folder"/></svg></button>
        <button class="task run multi" aria-label="记事本"><svg class="i24"><use href="#notepad"/></svg></button>
        <button class="task run" aria-label="设置"><svg class="i24"><use href="#gear"/></svg></button>
        <button class="task run" aria-label="控制台"><svg class="i24"><use href="#console"/></svg></button>
        <button class="task front" aria-label="WPS"><svg class="i24"><use href="#wps"/></svg></button>
      </div>
      <div class="tray"><time>10:11<br>2023/11/24</time></div>
    </footer>
  </section>
</main>
<script src="rows.js"></script>
</body>
</html>
```
FILE: rows.js
```js
// Pads the data rows to the full column count and adds the empty rows below them.
const body = document.getElementById("rows");
const columns = 13;
for (let n = body.rows.length + 1; n <= 39; n++) {
  const row = body.insertRow();
  const head = document.createElement("th");
  head.textContent = n;
  row.append(head);
}
for (const row of body.rows) {
  while (row.cells.length <= columns) row.insertCell();
}
```
FILE: styles.css
```css
* { box-sizing: border-box; }
body { margin: 0; background: #000; color: #222; font: 12px/16px "Noto Sans", "Noto Sans CJK SC", sans-serif; }
button, input, select { font: inherit; color: inherit; margin: 0; padding: 0; border: 0; background: none; }
a { color: inherit; text-decoration: none; }
p { margin: 0; }
svg { fill: none; stroke: currentColor; flex: none; display: block; }
svg circle[fill], svg rect[fill], svg ellipse[fill], svg path[fill]:not([stroke]) { stroke: none; }
.sprite { position: absolute; width: 0; height: 0; }
.i { width: 16px; height: 16px; }
.c { width: 8px; height: 8px; }
.i20 { width: 20px; height: 20px; }
.i24 { width: 24px; height: 24px; }

.screens { display: flex; height: 100vh; }
.screen { flex: 1; min-width: 0; display: flex; flex-direction: column; }
.screen-main { padding-bottom: 26px; }
.screen-side { padding-top: 26px; }
.desktop { position: relative; flex: 1; min-height: 0; overflow: hidden; }
.wall { position: absolute; inset: 0; width: 100%; height: 100%; }

/* Desktop shortcuts */
.icons { position: relative; display: grid; grid-auto-rows: 103px; width: 75px; padding-top: 7px; }
.shortcut { position: relative; display: block; width: 75px; color: #fff; text-align: center; line-height: 17px; white-space: nowrap; text-shadow: 1px 1px 1px #000, 1px 1px 2px #000, 0 0 3px #000; }
.shortcut:nth-child(2) { white-space: normal; }
.art { width: 52px; height: 52px; margin: 0 auto 5px; }
.linked::after { content: "↗"; position: absolute; left: 11px; top: 36px; width: 16px; height: 16px; border: 1px solid #b9c8d8; background: #f3f6fa; color: #2b5da8; font: bold 14px/14px "DejaVu Sans", sans-serif; text-shadow: none; }
.loose { position: absolute; left: 380px; top: 213px; }

.console { position: absolute; left: 164px; top: 157px; width: 500px; height: 510px; background: #0c0c0c; box-shadow: 0 2px 12px rgba(0, 0, 0, .5); }
.console header { display: flex; align-items: center; gap: 5px; height: 30px; padding-left: 8px; background: #fff; color: #999; }

/* Spreadsheet window */
.wps { position: absolute; left: 245px; right: 259px; top: 0; bottom: 1px; display: flex; flex-direction: column; background: linear-gradient(90deg, #e1e8ec, #e1e4ec); box-shadow: 0 0 14px rgba(0, 0, 0, .5); }
.bare { display: flex; align-items: center; justify-content: center; }
.grow { flex: 1; }
.dim { color: #777; }

.titlebar { display: flex; align-items: center; height: 38px; padding: 5px 4px 2px; }
.tab { display: flex; align-items: center; gap: 6px; width: 112px; height: 30px; margin-right: 4px; padding-left: 13px; border-radius: 6px; background: #d6dcdf; }
.tab-docer { width: 124px; padding-left: 8px; }
.tab-file { width: 240px; height: 31px; padding: 0 8px; background: #fff; box-shadow: 0 0 2px #bcc4ca; }
.newtab { margin: 0 8px; }
.account { display: flex; align-items: center; gap: 16px; margin-left: auto; color: #333; }
.login { display: flex; align-items: center; gap: 5px; color: #2a55dc; }
.winctl { display: flex; gap: 24px; margin: 0 8px 0 31px; }

.menubar { display: flex; align-items: center; height: 36px; padding: 0 10px 0 16px; }
.file { gap: 4px; padding-right: 11px; border-right: 1px solid #c4cacf; }
.quick { display: flex; gap: 10px; padding: 0 12px; border-right: 1px solid #c4cacf; color: #aaa; }
.quick .on { color: #333; }
.sections { display: flex; gap: 30px; margin-left: 156px; padding-right: 33px; border-right: 1px solid #c4cacf; font-size: 13px; line-height: 20px; white-space: nowrap; }
.current { color: #107a57; font-weight: bold; box-shadow: 0 3px 0 -1px #107a57; }
.find { margin-left: 11px; }
.push { margin-left: auto; }
.share { display: flex; align-items: center; gap: 4px; width: 56px; height: 24px; margin-left: 12px; padding-left: 6px; border-radius: 4px; background: #14996a; color: #fff; }

.ribbon { display: flex; height: 75px; margin: 0 12px 1px; padding: 4px 0; border: 1px solid #ccd0d4; border-radius: 8px; background: #fff; box-shadow: 0 1px 2px #b8bcc0; color: #aaa; overflow: hidden; }
.group { position: relative; display: flex; padding: 4px 6px; border-right: 1px solid #d4d4d4; }
.group:last-child { border: 0; }
.stack { display: flex; flex-direction: column; }
.line { display: flex; align-items: center; height: 28px; }
.tool { display: flex; justify-content: center; align-items: center; width: 28px; height: 28px; }
.drop { display: flex; align-items: center; gap: 4px; height: 28px; padding-left: 8px; white-space: nowrap; }
.drop .c, .big .c { stroke-width: 2px; }
.big { display: flex; flex-direction: column; align-items: center; gap: 9px; width: 46px; padding-top: 5px; white-space: nowrap; }
.big span { display: flex; align-items: center; gap: 4px; }
.launch { position: absolute; right: 2px; bottom: 0; }
.glyph { font-size: 15px; }
.glyph sup { font-size: 11px; line-height: 8px; margin-bottom: 8px; }
.b { font-weight: bold; }
.it { font-style: italic; }
.u { text-decoration: underline; }
.tiny { font-size: 9px; line-height: 8px; font-weight: bold; text-align: center; }
.combo { position: relative; display: flex; align-items: center; height: 24px; margin-left: 2px; border: 1px solid #e4e4e4; border-radius: 4px 0 0 4px; background: #f8f8f8; }
.combo .c { position: absolute; right: 5px; }
.combo select { height: 22px; padding-left: 11px; appearance: none; opacity: 1; }
.combo-size { margin: 0 5px 0 0; border-left: 0; border-radius: 0 4px 4px 0; }
.combo-num { margin-right: 2px; border-radius: 4px; }
.face { width: 150px; color: #888; }
.size { width: 60px; font-size: 13px; }
.number { width: 78px; }
.yen { width: 40px; margin-right: 4px; padding-left: 6px; }
.yen .glyph { width: 16px; }
.group-clip { padding-left: 61px; }
.group-clip .stack { width: 44px; }
.group-font { padding-right: 10px; }
.group-align, .group-cells { padding-right: 14px; }
.group-style { padding: 4px 10px; }
.cond { width: 66px; }
.group-edit .line { gap: 6px; }

.notice { display: flex; align-items: center; justify-content: center; height: 40px; padding-right: 6px; background: #fff4e1; }
.notice p { display: flex; align-items: center; gap: 6px; margin-left: auto; }
.activate { width: 70px; height: 24px; margin: 0 auto 0 16px; border-radius: 3px; background: #f4a60c; color: #fff; }
.close { padding-left: 16px; color: #666; }

.formula { display: flex; gap: 8px; height: 41px; padding: 6px 12px 8px; background: linear-gradient(#e2e6eb, #ededed); }
.field { display: flex; align-items: center; border: 1px solid #c8ccd0; border-radius: 5px; background: #fff; color: #999; }
.namebox { width: 163px; padding-right: 3px; }
.namebox input { flex: 1; min-width: 0; text-align: center; }
.expr { flex: 1; gap: 6px; padding-left: 9px; }
.fx { width: 18px; font: italic 16px/20px "Liberation Serif", serif; }
.selected { width: 64px; height: 17px; margin-left: 12px; background: #0078d7; color: #fff; font: 13px/17px "Liberation Mono", monospace; }

.sheet { display: flex; flex: 1; min-height: 0; }
.grid { flex: 1; min-width: 0; overflow: hidden; background: #fff; }
table { width: 100%; table-layout: fixed; border-collapse: separate; border-spacing: 0; font: 13px/15px "Liberation Mono", monospace; color: #000; }
.w-num { width: 36px; }
.w-a { width: 182px; }
.w-b { width: 177px; }
.w-c { width: 157px; }
.w-d { width: 250px; }
.w-e { width: 72px; }
th, td { height: 19px; padding: 3px 0 0 2px; border-right: 1px solid #e0e0e0; border-bottom: 1px solid #e0e0e0; text-align: left; white-space: nowrap; }
th { padding: 0; background: #ededed; color: #666; font: 16px/18px "Liberation Serif", serif; text-align: center; }
thead th { height: 23px; padding-top: 2px; }
.corner { font: 11px/18px "DejaVu Sans", sans-serif; color: #777; }
thead .here { background: #d9d9d9; color: #107a57; border-bottom: 2px solid #3f8a2a; }
tbody .here { background: #dedede; border-right-color: #3f8a2a; }
td a { color: #0000c8; text-decoration: underline; }
.zh { padding-top: 0; vertical-align: top; font: 16px/16px "Noto Sans CJK SC", sans-serif; }
.active { position: relative; outline: 2px solid #3f8a2a; outline-offset: -1px; }
.active input { display: block; width: 64px; height: 15px; background: #000; color: #f4f43c; line-height: 15px; }
.active::after { content: ""; position: absolute; right: -3px; bottom: -3px; width: 6px; height: 6px; border: 1px solid #fff; background: #3f8a2a; }

.vbar { display: flex; flex-direction: column; align-items: center; width: 16px; padding-top: 23px; background: #e2e6ea; color: #777; font: 8px/16px "DejaVu Sans", sans-serif; }
.vbar .dash { width: 8px; height: 2px; margin: 7px 0 3px; background: #aab; }
.vbar .thumb { flex: 1; width: 8px; margin: 4px 0 27px; border-radius: 4px; background: #c8ccd0; }

.sheets { display: flex; align-items: center; height: 26px; border-top: 1px solid #ccd0d4; }
.nav { display: flex; gap: 6px; width: 102px; padding-left: 11px; color: #888; }
.leaf { width: 65px; height: 18px; border-right: 1px solid #c4c8cc; }
.open { height: 24px; align-self: flex-start; border: 0; border-radius: 0 0 6px 6px; background: #fff; color: #107a57; font-weight: bold; }
.add { margin-left: 4px; }
.hbar { display: flex; align-items: center; width: 42%; margin-left: auto; padding: 0 20px 0 6px; color: #666; font: 8px/16px "DejaVu Sans", sans-serif; }
.hbar b { margin-right: 12px; }
.hbar .thumb { flex: 1; height: 8px; margin: 0 53px 0 8px; border-radius: 4px; background: #c8ccd0; }
.hbar .dash { width: 1px; height: 9px; margin-left: 11px; background: #999; }

.status { display: flex; align-items: center; height: 24px; padding: 0 16px; border-top: 1px solid #c8ccd0; color: #333; }
.mode { margin-left: 12px; padding-left: 8px; border-left: 1px solid #c4c8cc; }
.views { display: flex; align-items: center; gap: 10px; margin-left: auto; padding-right: 15px; }
.modes { display: flex; align-items: center; gap: 8px; padding: 0 8px; border: solid #c4c8cc; border-width: 0 1px; }
.modes .bare { width: 24px; height: 23px; border-radius: 4px; }
.lit { background: #ccd0d3; }
.zoom { gap: 11px; margin: 0 15px 0 16px; }
.slider { appearance: none; width: 106px; height: 12px; margin: 0 12px; background: linear-gradient(90deg, #2a55c8 50%, #aeb2b6 50%) center / 100% 2px no-repeat; }
.slider::-webkit-slider-thumb { appearance: none; width: 11px; height: 11px; border: 3px solid #fff; border-radius: 50%; background: #888; box-shadow: 0 0 2px #777; }
.fullscreen { margin-left: 16px; }

/* Taskbars */
.taskbar { display: flex; height: 40px; background: linear-gradient(90deg, #22383f 0 40%, #1d2e3f 70%, #1a2747); color: #fff; }
.task { position: relative; display: flex; align-items: center; justify-content: center; width: 48px; height: 40px; }
.bold { stroke-width: 2px; }
.apps { display: flex; gap: 1px; margin-left: 3px; }
.run::after { content: ""; position: absolute; left: 4px; right: 4px; bottom: 0; height: 2px; background: #76b4ea; }
.multi::after { background: linear-gradient(90deg, #76b4ea 78%, #4d7ea6 78%); }
.front { background: #4e626b; box-shadow: inset 0 -2px 0 #76b4ea; }
.searchbox { display: flex; align-items: center; width: 288px; padding-left: 12px; border: 1px solid #d0d0d0; border-left: 0; background: #f2f2f2; color: #222; }
.searchbox input { flex: 1; min-width: 0; padding-left: 12px; font-size: 14px; }
.searchbox input::placeholder { color: #333; opacity: 1; }
.scene { width: 78px; height: 38px; }
.tray { display: flex; align-items: center; gap: 8px; margin-left: auto; }
.tray time { text-align: center; line-height: 19px; padding-right: 4px; white-space: nowrap; }
.ime { font-size: 16px; }
.notify { position: relative; display: flex; align-items: center; height: 40px; margin-right: 3px; padding: 0 21px 0 4px; border-right: 1px solid #8890a0; }
.notify b { position: absolute; left: 11px; top: 19px; width: 16px; height: 16px; border: 1px solid #aaa; border-radius: 50%; background: #2c3240; font-size: 11px; line-height: 14px; text-align: center; font-weight: normal; }
```
